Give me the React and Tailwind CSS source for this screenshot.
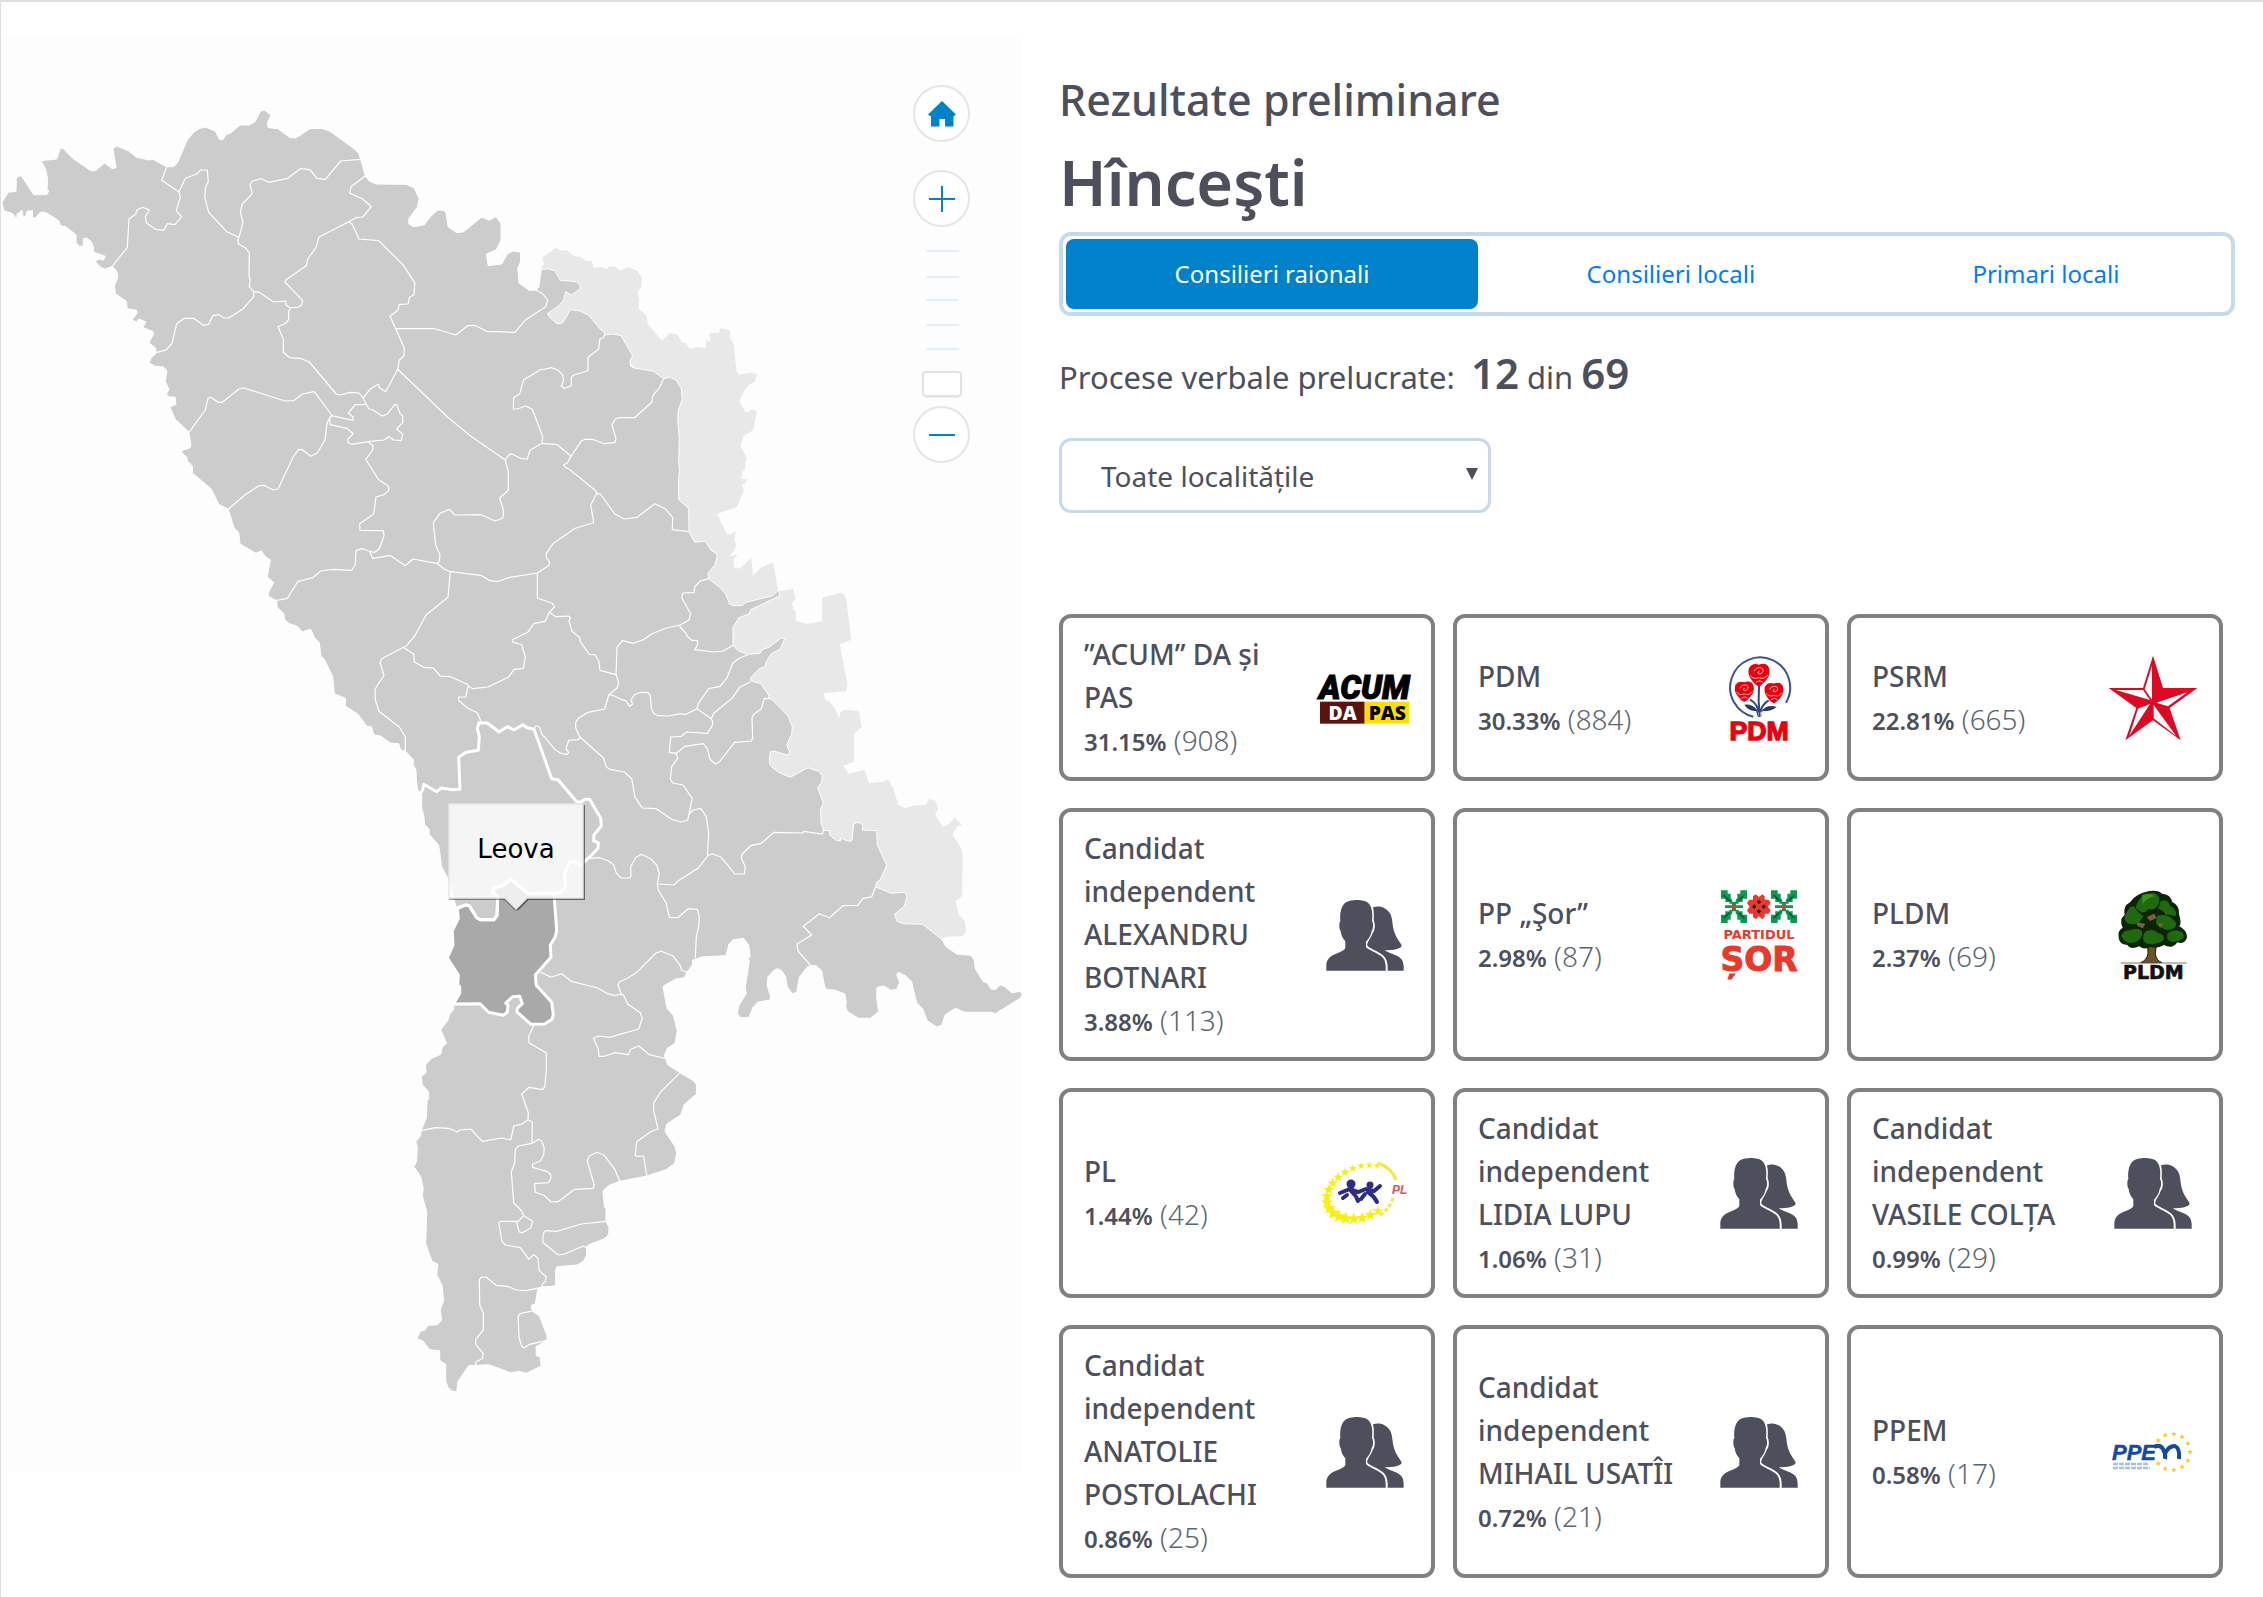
import React from "react";

/* Map geometry: every list of points is kept on one of five drawing tiles. */
const TILES = {
  A: [0, 90],
  B: [380, 200],
  C: [250, 560],
  D: [640, 560],
  E: [400, 960],
};

function place(tile, points) {
  const [ox, oy] = TILES[tile];
  return points
    .trim()
    .split(/\s+/)
    .map((pair) => {
      const [x, y] = pair.split(",").map(Number);
      return `${(ox + x / 3).toFixed(1)} ${(oy + y / 3).toFixed(1)}`;
    })
    .join("L");
}

const line = (parts) => "M" + parts.map(([t, p]) => place(t, p)).join("L");
const area = (parts) => line(parts) + "Z";

const COUNTRY = area([
  ["A", "6,337 25,307 48,304 49,264 58,257 66,260 101,314 140,314 146,304 141,296 143,268 136,235 123,212 170,207 181,174 190,176 218,205 272,242 286,242 314,219 337,236 348,233 339,177 350,168 385,182 410,202 447,210 458,208 500,230 521,230 532,219 562,150 580,128 600,115 615,111 645,122 659,149 668,149 680,133 691,130 720,105 748,105 766,94 781,64 793,60 813,75 801,101 805,113 834,116 870,143 887,144 930,116 966,115 990,124 1062,176 1076,190 1082,208 1096,258 1108,273 1128,282 1218,283 1243,294 1257,326 1252,352 1227,385 1226,401 1241,410 1273,404 1293,378 1314,360 1330,361 1338,368 1345,411 1370,428 1391,425 1445,381 1467,391 1488,380 1503,401 1503,451 1489,479 1459,493 1465,527"],
  ["B", "365,192 382,162 400,153 421,156 422,185 413,205 417,249 447,271 468,270 476,262 484,209 503,206 525,212 541,241 590,245 601,258 600,268 574,285 557,275 551,300 537,317 503,340 506,349 530,371 545,370 552,363 571,329 600,333 626,346 663,390 673,395 674,405 700,402 723,407 758,467 751,480 751,496 758,503 820,514 851,536 869,532 888,540 904,566 907,598 895,630 893,660 898,716 896,790 899,815 896,828 896,899 926,925 927,995 944,1027 976,1024 995,1053 1006,1058 1012,1068 1004,1096 984,1119 986,1136 1020,1163 1037,1182 1049,1213 1062,1217 1086,1216 1098,1207 1178,1187 1195,1171 1200,1187 1112,1229 1107,1242 1077,1253 1059,1282 1059,1336 1076,1353 1104,1363 1141,1360 1145,1350 1168,1341 1204,1314 1214,1316 1200,1348 1174,1361 1157,1388 1156,1399 1137,1407 1113,1432 1111,1442"],
  ["D", "331,362 362,371 386,405 387,414 400,422 444,468 457,500 455,523 440,555 449,576 444,586 404,574 391,575 388,605 392,618 415,637 451,652 504,623 536,634 547,647 545,666 533,683 550,730 542,745 543,790 551,811 568,812 569,825 588,841 601,843 602,835 627,844 636,841 641,793 650,788 663,789 669,799 667,810 710,812 712,855 740,916 720,960 709,967 707,980 752,1000 795,997 801,1010 793,1038 764,1063 771,1084 790,1091 848,1093 905,1138 919,1161 952,1183 993,1186 1003,1200 1006,1226 1030,1265 1042,1269 1053,1287 1067,1289 1080,1274 1093,1279 1115,1298 1143,1294 1146,1307 1140,1315 1066,1361 1055,1357 975,1357 946,1345 916,1364 905,1396 890,1401 862,1382 848,1347 830,1328 815,1266 798,1248 775,1237 770,1245 779,1267 770,1288 753,1291 732,1278 711,1282 710,1314 716,1355 691,1375 655,1375 622,1354 617,1340 619,1325 614,1301 583,1290 562,1289 554,1281 545,1232 528,1217 512,1217 502,1221 478,1252 470,1297 456,1301 441,1278 437,1250 425,1232 413,1226 403,1230 384,1250 381,1276 392,1310 389,1321 354,1326 340,1341 326,1373 303,1373 292,1361 297,1335 319,1301 316,1280 328,1205 324,1194 331,1191 326,1155 311,1135 280,1139 267,1152 258,1187 184,1191 170,1197 158,1200 157,1215 141,1237 133,1253 107,1257 69,1279 81,1345 100,1366 112,1412 105,1450 82,1465 73,1488 78,1497"],
  ["E", "803,314 840,338 880,362 890,374 889,403 853,433 842,465 800,492 795,514 825,560 830,580 824,610 798,629 740,648 659,664 628,676 609,692 613,740 618,746 618,784 627,802 626,824 612,837 566,854 559,861 560,886 550,904 531,915 471,920 466,932 467,978 414,983 406,1032 394,1036 397,1053 418,1068 441,1127 441,1141 408,1160 409,1187 420,1190 424,1218 379,1240 358,1234 332,1238 266,1214 206,1217 174,1264 170,1296 157,1293 145,1284 137,1264 137,1213 119,1201 119,1172 89,1169 68,1142 51,1136 61,1114 74,1111 84,1096 112,1094 125,1081 121,1047 131,1024 126,976 110,944 113,912 96,904 77,851 80,754 67,707 70,686 62,650 42,620 50,603 52,560 47,546 62,526 64,511 79,474 81,423 86,416 86,396 67,374 64,350 79,337 76,316 95,295 122,283 127,261 140,250 122,209 143,182 149,162 161,149 162,127"],
  ["C", "631,1300 631,1280 625,1274 627,1245 594,1194 611,1155 609,1112 627,1075 620,1046 608,1005 596,960 575,920 566,856 537,822 538,809 524,793 521,765 515,745 515,705 503,690 499,660 498,630 489,613 491,600 466,573 452,570 446,551 421,549 393,529 371,524 365,501 350,498 323,462 286,438 286,415 253,401 248,350 222,296 213,290 208,248 193,232 182,208 157,215 140,198 118,191 104,179 101,160 82,143 80,122 54,108 56,96 71,68 52,50 61,0"],
  ["A", "813,1412 795,1399 784,1382 768,1390 720,1362 716,1327 702,1314 685,1258 656,1243 634,1197 577,1149 577,1128 562,1112 561,1102 544,1087 551,1079 568,1075 573,1067 567,1027 526,988 509,951 528,943 525,921 508,921 499,912 507,898 496,875 501,842 491,831 465,829 447,818 454,803 469,789 467,775 447,758 461,731 459,725 428,712 438,696 416,687 410,696 396,690 411,670 410,661 382,656 379,634 347,612 343,588 353,563 351,545 337,529 315,538 301,531 285,514 298,507 311,510 316,499 281,487 280,469 274,455 260,444 250,446 250,469 238,469 228,457 228,434 197,410 181,407 178,394 160,381 136,367 121,367 106,384 98,383 97,361 81,364 76,381 69,380 66,361 52,372 50,386 37,370 12,363"],
]);

const EAST_BANK = area([
  ["B", "484,209 485,200 493,193 487,173 527,143 545,152 559,150 583,169 602,171 620,184 636,183 640,204 661,201 680,207 686,200 703,198 721,212 745,201 773,213 786,235 783,263 773,275 778,300 775,325 800,348 803,372 846,422 870,399 890,403 908,428 917,430 929,446 950,441 978,444 979,418 991,427 988,400 1018,398 1019,384 1050,391 1051,415 1061,432 1069,513 1076,525 1090,522 1114,518 1132,523 1124,545 1107,554 1093,572 1078,604 1096,636 1107,636 1114,628 1131,634 1120,690 1090,709 1082,737 1102,778 1096,783 1095,809 1087,815 1083,836 1103,838 1093,851 1086,853 1091,872 1070,921 1011,942 1042,1004 1067,995 1063,1020 1069,1033 1064,1050 1048,1070 1073,1062 1060,1080 1063,1102 1079,1106 1114,1074 1119,1127 1142,1103 1179,1087 1194,1170 1202,1173 1238,1167 1247,1195 1236,1210 1240,1228 1247,1236 1248,1263 1282,1272 1326,1263 1327,1193 1381,1178 1391,1181 1399,1201 1414,1319 1379,1333 1403,1456 1398,1474 1330,1480"],
  ["D", "556,419 570,426 585,447 597,474 602,456 615,449 657,453 665,502 642,521 642,605 610,617 626,641 674,629 686,669 732,665 740,659 750,664 753,678 759,682 775,735 796,745 815,738 858,734 866,717 886,722 895,750 887,755 887,767 909,801 927,792 944,773 967,796 953,799 937,822 962,862 968,887 966,1008 947,1024 956,1065 974,1083 978,1113 968,1128 920,1130 905,1138 820,1130 740,1080 680,960 600,900 480,720 380,640 360,600 400,500 300,400"],
  ["B", "1000,1330 960,1200 940,1100 880,900 860,600 800,530 700,450 600,360 520,400 480,330 474,275"],
]);

const BORDERS = [
  [["A", "500,230 485,271 537,306 541,322 529,362 544,379 541,386 524,404 502,401 492,421 467,418 440,400 436,380 448,360 428,352 410,361 407,373 387,386 382,472 337,529"]],
  [["A", "537,306 556,265 590,252 602,240 622,240 625,275 617,290 614,322 626,367 680,425 717,442"]],
  [["A", "1082,208 1022,213 976,268 951,265 930,239 901,236 863,265 806,277 784,266 757,273 750,285 757,311 727,342 721,367 729,397 717,442 713,450 716,463 736,473 748,489 747,560 751,570 748,590 761,604 761,620 730,656 686,684 672,684 656,674 638,677 626,703 611,706 581,685 553,685 530,701 516,760 498,780 469,788"]],
  [["A", "761,604 778,607 821,636 857,633 858,644 870,653 894,652 904,646 908,632 856,577 856,571 919,527 923,507 948,473 957,441 1046,395 1068,383 1088,381 1114,350 1088,327 1049,309 1053,290 1096,258"]],
  [["A", "1046,395 1056,401 1077,447 1136,452 1209,524 1244,578 1242,614 1229,621 1224,642 1198,643 1194,660 1170,679 1187,716 1213,774 1211,798 1198,811 1193,838 1157,905 1138,893 1136,882 1112,896 1089,924 1077,909 1050,907 1020,915 1009,912 928,816 905,806 869,803 850,787 850,747 834,710 857,700 866,688 866,666 870,653"]],
  [["A", "567,1027 616,960 624,925 632,922 655,937 667,937 716,898 730,893 855,933 881,932 907,912 943,905 995,975 987,988 981,1000 975,1050 952,1089 932,1099 905,1078 895,1079 878,1104 834,1197 819,1200 792,1186 776,1188 735,1214 685,1258"]],
  [["A", "1089,924 1106,956 1119,960 1146,978 1161,973 1184,944 1190,944 1200,970 1208,978 1208,997 1190,1017 1208,1033 1204,1052 1181,1050 1166,1040 1152,1050 1104,1055 1056,1063 1044,1058 1044,1047 1060,1031 1040,1015 991,1004 988,988 995,977 1058,991 1060,982 1045,969 1066,944 1097,943"]],
  [["A", "1104,1055 1119,1067 1118,1080 1097,1108 1136,1169 1166,1189 1166,1201 1153,1214 1128,1221 1121,1272 1079,1301 1080,1321 1150,1322 1152,1337 1138,1376 1124,1387 1109,1384 1088,1376 1068,1381 1066,1424 1055,1441 998,1438 962,1443 938,1463 893,1475 862,1525 830,1531"]],
  [["A", "1109,1384 1118,1406 1170,1396 1216,1427 1239,1407 1280,1415 1311,1420 1333,1438 1352,1445 1442,1456"], ["B", "330,1142 352,1145 385,1133 472,1119"]],
  [["B", "53,508 205,653 275,710 376,780 385,815 385,871 359,894 371,935 368,955 345,963 304,944 224,945 209,928 180,940 160,968 167,1036 180,1065 178,1083 171,1090"]],
  [["B", "47,385 164,386 227,405 263,377 284,376 320,394 405,397 435,361 497,320 503,300 490,283 468,270"]],
  [["B", "674,405 671,412 659,418 656,447 624,472 624,512 580,526 574,533 574,557 553,565 544,558 550,545 549,526 534,510 515,503 480,510 431,539 419,581 401,593 400,627 412,627 437,618 457,628 488,710 486,730 450,751 442,777 425,776 396,762 387,764 376,780"]],
  [["B", "486,730 532,734 573,769 605,722 615,718 637,718 673,731 704,728 708,716 696,674 706,657 718,653 764,653 816,606 819,586 836,566 851,536"]],
  [["B", "573,769 562,789 551,794 555,801 571,810 647,872 650,880 632,915 641,968 586,985 520,1030 499,1060 499,1073 508,1085 508,1096 472,1119 472,1194 517,1210 524,1221 508,1236 496,1264 462,1270 443,1297 397,1319 398,1326 425,1334 436,1371 430,1405 402,1408 385,1432 324,1461 278,1466 265,1458"]],
  [["B", "650,880 661,882 704,941 732,957 771,952 825,911 858,928 878,953 877,989 926,995"]],
  [["B", "508,1236 527,1250 565,1248 572,1253 567,1262 576,1294 600,1313 601,1325 628,1363 645,1364 656,1382 660,1411 708,1424 711,1342 727,1322 760,1330 790,1319 816,1301 860,1284 900,1275 927,1260 932,1241 905,1193 908,1179 942,1178 944,1161 961,1143 986,1136"]],
  [["B", "900,1275 900,1281 918,1300 921,1308 935,1321 952,1321 953,1334 944,1349 1003,1356 1029,1353 1059,1336"]],
  [["D", "324,284 297,295 278,310 262,352 240,379 206,386 175,431 171,446 214,476 218,485 217,497 202,520 140,516 124,529 92,531 88,577 109,580 135,559 190,551 202,565 210,598 226,612 238,606 284,547 334,543 338,535 336,475 342,462 364,447 373,415 387,416"]],
  [["D", "214,476 222,459 276,415 299,382 331,366"]],
  [["B", "211,1115 204,1192 138,1245 106,1305 80,1337"], ["C", "460,262 395,296 390,308 402,346 375,388 376,420 387,454 448,501 466,530 466,573"]],
  [["C", "460,262 491,282 493,306 524,323 550,324 571,348 602,350 655,374"]],
  [["C", "655,376 647,411 625,411 627,422 652,444 682,458 692,482"]],
  [["C", "1098,343 1106,368 1101,384 1076,405 1064,447 1014,457 985,475 977,487 977,504 989,530 1060,593 1069,621 1080,628 1123,636 1145,656 1155,712 1177,744 1219,746 1265,778 1293,786 1313,780 1327,715 1299,675 1268,669 1261,657 1265,620 1283,595 1278,579"]],
  [["C", "1076,405 1089,406 1115,419 1127,422 1139,439 1148,432 1143,420 1153,404 1172,397 1194,398 1201,407 1204,444 1212,461 1225,467 1256,468 1292,461 1305,464 1341,446"]],
  [["C", "989,533 985,539 956,541 948,567 956,577 952,583 935,581 915,569 885,532 877,525 868,500 858,497 851,508"]],
  [["C", "1313,780 1317,763 1330,750 1352,745 1369,770 1376,820 1372,890 1344,925 1285,962 1272,975 1225,972"]],
  [["D", "202,887 217,881 241,890 262,914 284,942 313,942 316,920 304,895 306,883 332,857 364,850 402,817 488,819 491,814 547,822 551,811"]],
  [["C", "1020,895 1049,893 1075,902 1091,914 1098,937 1112,954 1139,954 1143,948 1142,920 1158,892 1175,883 1203,897 1220,915 1228,940 1222,972 1225,990 1249,1030 1258,1072 1283,1073 1315,1046 1342,1048 1348,1070 1346,1100 1339,1130 1336,1195"]],
  [["D", "707,980 695,1010 668,1016 653,1036 609,1037 568,1073 538,1061 490,1099 515,1125 471,1152 474,1173 512,1217"]],
  [["C", "872,1237 903,1252 935,1241 964,1264 1043,1284 1073,1301 1094,1307 1114,1302 1104,1275 1107,1266 1135,1253 1160,1237 1218,1179 1234,1174 1268,1187 1291,1217 1295,1231 1312,1237"]],
  [["E", "662,104 670,104 683,132 721,158 727,175 716,207 628,232 597,228 580,234 595,267 597,289 613,289 643,278 685,284 692,268 717,258 748,284 803,297"]],
  [["E", "840,338 780,398 761,430 761,452 774,507 752,515 710,545 706,585 710,589 731,588 740,648"]],
  [["E", "401,197 386,229 387,248 439,279 439,333 434,380 428,389 387,382 365,403 385,458 384,480 364,493 341,498 332,540 304,534 247,544 212,507 180,510 172,516 147,505 106,503 64,512"]],
  [["E", "384,480 397,486 396,550 355,558 346,568 344,610 334,635 341,729 365,752 371,767 355,784 301,784 296,789 306,844 316,855 361,863 386,898 401,884 414,895 417,931 439,951 436,965 428,970 425,982"]],
  [["E", "396,550 417,538 425,543 433,565 431,584 421,603 397,613 398,622 440,634 452,643 452,656 445,668 404,671 406,697 432,706 454,726 474,725 524,688 580,685 583,675 562,604 567,588 591,577 613,586 645,629 659,664"]],
  [["E", "371,767 398,784 392,804 366,819 357,815 350,786"]],
  [["E", "618,784 544,792 470,814 437,812 430,820 428,847 475,885 494,882 550,858 559,863"]],
  [["E", "466,978 425,982 379,992 350,990 322,979 289,976 258,951 243,952 238,960 239,1035 250,1060 250,1110 227,1138 227,1153 249,1180 248,1195 228,1206 226,1216"]],
  [["E", "397,1053 360,1061 354,1070 357,1130 364,1157 372,1164 389,1153 441,1141"]],
].map(line).join("");

const HINCESTI = line([
  ["C", "509,703 518,690 521,673 560,695 574,684 608,689 630,688 626,592 648,577 685,571 688,530 682,505 687,488 712,489 747,516 772,500 792,510 818,494 832,503 852,508 905,656 924,659 980,725 991,727 1005,718 1019,718 1052,775 1054,798 1032,825 1031,843 1045,848 1044,865 1020,890 988,918 980,905 959,906 944,940 946,980 932,998 833,1001 783,958 762,975 730,985 730,997 743,1010 741,1067 732,1079 691,1079 680,1073 658,1037 647,1035 622,1043"],
]);

const LEOVA = area([
  ["C", "622,1046 647,1035 658,1037 680,1073 691,1079 732,1079 741,1067 743,1010 730,997 730,985 762,975 783,958 833,1001 912,1001 920,1112 916,1130 901,1155 903,1192 856,1245 859,1276 905,1327 910,1364 906,1378 884,1392 843,1393 801,1356 802,1345 817,1331 809,1309 788,1310 767,1329 774,1335 772,1357 760,1366 716,1357 690,1331 610,1332 629,1300 629,1280 623,1274 625,1245 592,1194 609,1155 607,1112 625,1075"],
]);

function MoldovaMap() {
  return (
    <svg viewBox="1 34 1021 1438" className="block w-full" role="img" aria-label="Harta raioanelor">
      <g strokeLinejoin="round" stroke="#ffffff">
        <path d={EAST_BANK} fill="#e8e8e8" stroke="none" />
        <path d={COUNTRY} fill="#cccccc" strokeWidth="1" />
        <path d={BORDERS} fill="none" strokeWidth="1.2" />
        <path d={LEOVA} fill="#a9a9a9" strokeWidth="3" />
        <path d={HINCESTI} fill="none" strokeWidth="3" />
      </g>
      <path d="M584 805V899H528L517 910" fill="none" stroke="#000000" strokeOpacity="0.5" strokeWidth="2" />
      <path d="M449 899H505L516 910" fill="none" stroke="#000000" strokeOpacity="0.4" strokeWidth="2" />
      <path d="M449 804H583V898H527L516 909L505 898H449Z" fill="#ffffff" fillOpacity="0.8" stroke="#e6e6e6" strokeWidth="1.5" />
      <text x="516" y="858" textAnchor="middle" fontSize="26" fill="#000000" className="font-['DejaVu_Sans',sans-serif]">
        Leova
      </text>
    </svg>
  );
}

const roundButton =
  "flex size-[57px] items-center justify-center rounded-full border-2 border-[#e5e5e5] bg-white";

function ZoomControls() {
  return (
    <div className="absolute top-[51px] right-[52px] flex flex-col items-center">
      <button type="button" aria-label="Acasă" className={roundButton}>
        <svg viewBox="0 0 28 26" className="h-[26px] w-[28px]">
          <path d="M14 0L28 13.500L26 15H25.500V25.500H17V18H11.500V25.500H3V15H2L0 13.500Z" fill="#0082ca" />
        </svg>
      </button>
      <button type="button" aria-label="Mărește" className={`${roundButton} mt-7`}>
        <svg viewBox="0 0 26 26" className="size-[26px]">
          <path d="M0 13H26M13 0V26" stroke="#0082ca" strokeWidth="2" />
        </svg>
      </button>
      <div className="relative">
        <svg viewBox="0 0 57 179" className="block h-[179px] w-[57px]">
          <path d="M13 24H46M13 50H46M13 73H46M13 98H46M13 122H46M13 170H46" stroke="#e0eff8" strokeWidth="2" />
          <rect x="10" y="145" width="38" height="24" rx="3" fill="#ffffff" stroke="#e2e2e2" strokeWidth="2" />
        </svg>
        <input
          type="range"
          min="0"
          max="5"
          defaultValue="0"
          aria-label="Nivel zoom"
          className="absolute inset-0 h-full w-full opacity-0"
        />
      </div>
      <button type="button" aria-label="Micșorează" className={roundButton}>
        <svg viewBox="0 0 26 26" className="size-[26px]">
          <path d="M0 13H26" stroke="#0082ca" strokeWidth="2" />
        </svg>
      </button>
    </div>
  );
}

/* Party logos */
const logo = "size-[90px] shrink-0 overflow-visible";

function AcumLogo() {
  return (
    <svg viewBox="810 157 270 270" className={logo} role="img" aria-label="ACUM DA PAS">
      <text x="943" y="294" textAnchor="middle" fontSize="98" fontWeight="900" fontStyle="italic" fill="#000000" stroke="#000000" strokeWidth="3" className="font-[Roboto,sans-serif]">
        ACUM
      </text>
      <rect x="810" y="303" width="134" height="66" fill="#5a1410" />
      <rect x="944" y="303" width="134" height="66" fill="#ffde00" />
      <text x="878" y="357" textAnchor="middle" fontSize="58" fontWeight="800" fill="#ffffff" className="font-['Open_Sans',sans-serif]">
        DA
      </text>
      <text x="1012" y="357" textAnchor="middle" fontSize="58" fontWeight="800" fill="#000000" className="font-['Open_Sans',sans-serif]">
        PAS
      </text>
    </svg>
  );
}

function Rose({ x, y, size }) {
  return (
    <g transform={`translate(${x} ${y}) scale(${size})`}>
      <path d="M-30 -18Q-20 -34 0 -28Q22 -36 30 -18Q36 2 22 18Q12 32 0 38Q-14 32 -22 18Q-36 2 -30 -18Z" fill="#e8000e" />
      <path d="M-14 -8Q-10 -20 2 -19Q14 -18 12 -8Q8 2 -2 -1Q-6 -7 2 -9M-27 4Q-16 18 0 11Q16 18 27 2M-10 26Q0 16 12 25" fill="none" stroke="#f7b3b7" strokeWidth="3" />
    </g>
  );
}

function PdmLogo() {
  return (
    <svg viewBox="42 38 270 270" className={logo} role="img" aria-label="PDM">
      <path d="M160 229A90 90 0 1 1 258 187" fill="none" stroke="#3f4f94" strokeWidth="6" />
      <path d="M177 135Q174 180 179 228M150 178Q172 190 176 215M206 180Q186 192 181 215" fill="none" stroke="#33457f" strokeWidth="6" />
      <path d="M133 193Q158 190 172 210L176 228H184L186 210Q204 190 230 200Q210 216 188 211L181 230H174L168 212Q145 212 133 193Z" fill="#25386f" />
      <Rose x={177} y={101} size={1} />
      <Rose x={133} y={151} size={0.9} />
      <Rose x={222} y={155} size={0.9} />
      <text x="177" y="299" textAnchor="middle" fontSize="80" fontWeight="700" fill="#e8000e" stroke="#e8000e" strokeWidth="4" className="font-['Liberation_Sans',sans-serif]">
        PDM
      </text>
    </svg>
  );
}

function StarLogo() {
  return (
    <svg viewBox="1224 38 270 270" className={logo} role="img" aria-label="PSRM">
      <path d="M1359 46L1389 143L1492 143L1409 203L1442 300L1359 240L1276 300L1309 203L1226 143L1329 143Z" fill="#db0a22" />
      <g fill="#ffffff">
        <path d="M1356 76V178L1334 147Z" />
        <path d="M1462 156L1404 198L1369 187Z" />
        <path d="M1428 286L1361 234L1361 194Z" />
        <path d="M1288 286L1314 205L1350 191Z" />
        <path d="M1248 149L1329 149L1350 179Z" />
      </g>
    </svg>
  );
}

const PEOPLE_FRONT =
  "M829 1111V1094C830 1078 838 1069 856 1061C872 1054 884 1050 886 1043V1023C878 1014 873 1003 872 992C868 988 867 974 869 966L871 962C869 940 873 918 885 908C896 898 938 894 954 907C968 920 968 943 966 962C971 968 970 986 965 992C963 1005 957 1014 948 1024V1040C956 1050 980 1056 994 1068C1006 1078 1008 1092 1007 1111Z";
const PEOPLE_BACK =
  "M969 921C988 914 1010 921 1021 941C1029 957 1026 976 1034 998C1041 1018 1052 1026 1055 1036C1053 1046 1030 1049 1004 1050C1030 1066 1060 1064 1061 1097V1111H1013C1014 1090 1011 1074 997 1063C984 1052 958 1044 952 1036C950 1026 962 1016 968 998C976 990 976 970 971 960C972 945 972 932 969 921Z";

function PeopleLogo() {
  return (
    <svg viewBox="810 869 270 270" className={logo} role="img" aria-label="Candidat independent">
      <path d={PEOPLE_FRONT} fill="#4d4f5c" />
      <path d={PEOPLE_BACK} fill="#4d4f5c" />
    </svg>
  );
}

function Sprig({ x }) {
  const leaf = "M-39 -49H-19V-39H-10V-26L-5 -20V-9H-14V-14H-26V-24H-39Z";
  return (
    <g transform={`translate(${x} 799)`} fill="#089a50">
      <path d={leaf} />
      <path d={leaf} transform="scale(-1 1)" />
      <path d={leaf} transform="scale(1 -1)" />
      <path d={leaf} transform="scale(-1 -1)" />
      <path d="M-27 -4H-6V-14H6V-4H27V4H6V14H-6V4H-27Z" />
      <rect x="-6" y="-6" width="12" height="12" fill="#e8392c" />
      <path d="M-31 -35L-14 -18M31 -35L14 -18M-31 35L-14 18M31 35L14 18" stroke="#17492d" strokeWidth="4" />
    </g>
  );
}

function SorLogo() {
  return (
    <svg viewBox="44 749 270 270" className={logo} role="img" aria-label="Partidul Șor">
      <Sprig x={104} />
      <Sprig x={254} />
      <path d="M169 762L179 770L189 762L196 768V778H208L214 788L206 799L214 810L208 820H196V830L189 837L179 828L169 837L161 830V820H150L143 810L151 799L143 788L150 778H161V768Z" fill="#e8392c" />
      <path d="M179 778L186 785L179 791L172 785ZM179 807L186 813L179 820L172 813ZM158 799L165 792L171 799L165 806ZM187 799L193 792L200 799L193 806Z" fill="#2b1a1a" />
      <text x="179" y="896" textAnchor="middle" fontSize="39" fontWeight="700" fill="#e8392c" className="font-['DejaVu_Sans',sans-serif]">
        PARTIDUL
      </text>
      <text x="179" y="991" textAnchor="middle" fontSize="99" fontWeight="700" fill="#e8392c" stroke="#e8392c" strokeWidth="3" className="font-['DejaVu_Sans',sans-serif]">
        ȘOR
      </text>
    </svg>
  );
}

function TreeLogo() {
  return (
    <svg viewBox="1224 749 270 270" className={logo} role="img" aria-label="PLDM">
      <path d="M1343 905L1344 940Q1340 960 1322 967H1386Q1368 960 1366 940L1370 905Z" fill="#6b5327" stroke="#1c1708" strokeWidth="3" />
      <path d="M1348 752Q1376 748 1386 760Q1412 762 1416 784Q1440 796 1437 822Q1446 850 1438 858Q1462 870 1461 892Q1452 914 1432 906Q1418 928 1392 914Q1372 926 1352 920Q1332 930 1318 918Q1292 930 1282 914Q1256 912 1256 890Q1252 872 1268 862Q1256 838 1274 824Q1268 798 1290 786Q1306 760 1348 752Z" fill="#0e2409" />
      <g fill="#1f6a0f">
        <path d="M1314 784Q1330 756 1362 758Q1384 766 1376 790Q1366 812 1346 806Q1332 824 1318 812Q1300 806 1314 784Z" />
        <path d="M1284 810Q1292 792 1304 800Q1312 818 1330 826Q1320 852 1298 852Q1276 850 1274 836Q1274 822 1284 810Z" />
        <path d="M1382 782Q1404 776 1410 796Q1432 806 1428 828Q1412 822 1398 824Q1388 808 1374 806Z" />
        <path d="M1372 826Q1400 820 1414 834Q1436 846 1424 862Q1404 876 1386 862Q1360 856 1372 826Z" />
        <path d="M1264 886Q1272 868 1292 870Q1308 860 1326 872Q1330 896 1306 906Q1274 914 1264 886Z" />
        <path d="M1336 874Q1356 862 1374 878Q1400 884 1388 902Q1362 918 1336 908Q1322 892 1336 874Z" />
        <path d="M1402 880Q1424 862 1446 876Q1458 890 1440 900Q1414 912 1402 896Z" />
      </g>
      <path d="M1326 764Q1350 756 1364 768Q1340 772 1328 792Z" fill="#3a9618" />
      <path d="M1340 830L1362 820L1370 832L1350 842ZM1310 846L1336 850L1328 864L1312 856ZM1374 848L1392 852L1380 862Z" fill="#7a6038" />
      <path d="M1262 968H1460" stroke="#777777" strokeWidth="3" />
      <text x="1360" y="1015" textAnchor="middle" fontSize="57" fontWeight="700" fill="#111111" stroke="#111111" strokeWidth="2" className="font-['DejaVu_Sans',sans-serif]">
        PLDM
      </text>
    </svg>
  );
}

const starPath = (cx, cy, r) => {
  let d = "";
  for (let i = 0; i < 10; i += 1) {
    const a = -Math.PI / 2 + (i * Math.PI) / 5;
    const q = i % 2 ? r * 0.42 : r;
    d += `${i ? "L" : "M"}${(cx + q * Math.cos(a)).toFixed(1)} ${(cy + q * Math.sin(a)).toFixed(1)}`;
  }
  return d + "Z";
};

const PL_STARS = Array.from({ length: 18 }, (_, i) => {
  const a = ((45 + i * 14) * Math.PI) / 180;
  const big = 7.2 - Math.abs(i - 5) * 0.3;
  return starPath(41 + 33 * Math.cos(a) - 9 * Math.sin(a), 44 + 27 * Math.sin(a), big);
}).join("");

function PlLogo() {
  return (
    <svg viewBox="0 0 90 90" className={logo} role="img" aria-label="PL">
      <path d={PL_STARS} fill="#f8ee10" />
      <path d="M58 15Q72 20 76 32" fill="none" stroke="#f3e940" strokeWidth="3" />
      <path d="M73 50Q70 60 60 67" fill="none" stroke="#f3e940" strokeWidth="3" strokeDasharray="4 2" />
      <g fill="none" stroke="#2f2c86" strokeWidth="4" strokeLinecap="round">
        <path d="M20 45L30 41L38 44L46 41L54 43L60 38M31 43Q36 47 38 53M27 47L23 50M48 44Q54 48 57 54M45 46L41 51" />
      </g>
      <circle cx="31" cy="36" r="4.500" fill="#2f2c86" />
      <circle cx="50" cy="37" r="3.500" fill="#2f2c86" />
      <text x="72" y="46" fontSize="12" fontWeight="700" fontStyle="italic" fill="#ea4b5b" className="font-['Liberation_Sans',sans-serif]">
        PL
      </text>
    </svg>
  );
}

const PPEM_STARS = Array.from({ length: 11 }, (_, i) => {
  const a = ((-140 + i * 28) * Math.PI) / 180;
  return starPath(64 + 18 * Math.cos(a), 45 + 18 * Math.sin(a), 3);
}).join("");

function PpemLogo() {
  return (
    <svg viewBox="0 0 90 90" className={logo} role="img" aria-label="PPEM">
      <path d={PPEM_STARS} fill="#f6c832" />
      <text x="4" y="53" fontSize="22" fontWeight="700" fontStyle="italic" fill="#164a9c" stroke="#164a9c" strokeWidth="0.500" className="font-['Liberation_Sans_Narrow','Liberation_Sans',sans-serif]">
        PPE
      </text>
      <path d="M46 40Q52 37 55 42Q58 47 57 52M57 47Q60 39 67 39Q72 41 71 52" fill="none" stroke="#164a9c" strokeWidth="4" strokeLinejoin="round" />
      <path d="M5 57H40M5 61H42" stroke="#a9c0e4" strokeWidth="2.500" strokeDasharray="5 1" />
    </svg>
  );
}

const RESULTS = [
  { name: "”ACUM” DA și PAS", share: "31.15%", votes: 908, Logo: AcumLogo },
  { name: "PDM", share: "30.33%", votes: 884, Logo: PdmLogo },
  { name: "PSRM", share: "22.81%", votes: 665, Logo: StarLogo },
  { name: "Candidat independent ALEXANDRU BOTNARI", share: "3.88%", votes: 113, Logo: PeopleLogo },
  { name: "PP „Şor”", share: "2.98%", votes: 87, Logo: SorLogo },
  { name: "PLDM", share: "2.37%", votes: 69, Logo: TreeLogo },
  { name: "PL", share: "1.44%", votes: 42, Logo: PlLogo },
  { name: "Candidat independent LIDIA LUPU", share: "1.06%", votes: 31, Logo: PeopleLogo },
  { name: "Candidat independent VASILE COLȚA", share: "0.99%", votes: 29, Logo: PeopleLogo },
  { name: "Candidat independent ANATOLIE POSTOLACHI", share: "0.86%", votes: 25, Logo: PeopleLogo },
  { name: "Candidat independent MIHAIL USATÎI", share: "0.72%", votes: 21, Logo: PeopleLogo },
  { name: "PPEM", share: "0.58%", votes: 17, Logo: PpemLogo },
];

function ResultCard({ name, share, votes, Logo }) {
  return (
    <li className="flex items-center justify-between gap-4 rounded-xl border-4 border-[#808080] px-[21px] py-[15px]">
      <div className="text-[28px] leading-[43px]">
        <h3 className="font-medium">{name}</h3>
        <p>
          <strong className="text-[24px] leading-none font-semibold">{share}</strong>{" "}
          <span className="font-light text-[#5b6770]">({votes})</span>
        </p>
      </div>
      <Logo />
    </li>
  );
}

function Tabs() {
  const idle = "flex-auto rounded-lg text-[#007bff]";
  return (
    <div role="tablist" className="flex h-[84px] rounded-xl border-4 border-[#c5daef] p-[3px] text-[24px]">
      <button type="button" role="tab" aria-selected="true" className="flex-auto rounded-lg bg-[#0082ca] text-white">
        Consilieri raionali
      </button>
      <button type="button" role="tab" aria-selected="false" className={idle}>
        Consilieri locali
      </button>
      <button type="button" role="tab" aria-selected="false" className={idle}>
        Primari locali
      </button>
    </div>
  );
}

export default function App() {
  return (
    <div className="min-h-screen border-t-2 border-l border-[#dedede] bg-white font-['Noto_Sans',sans-serif] text-[#4d4f5c]">
      <main className="grid grid-cols-[1021fr_1241fr] pt-8">
        <section className="relative self-start bg-[#fdfdfd]">
          <MoldovaMap />
          <ZoomControls />
        </section>
        <section className="pt-[34px] pr-7 pl-[37px]">
          <h2 className="text-[43px] leading-[64px] font-medium">Rezultate preliminare</h2>
          <h1 className="text-[63px] leading-[100px] font-semibold">Hînceşti</h1>
          <Tabs />
          <p className="mt-6 text-[31px] leading-[74px]">
            Procese verbale prelucrate:&nbsp; <strong className="text-[42px] leading-none font-semibold">12</strong> din{" "}
            <strong className="text-[42px] leading-none font-semibold">69</strong>
          </p>
          <div className="relative mt-6 w-[432px]">
            <select
              aria-label="Localitatea"
              className="h-[75px] w-full appearance-none rounded-xl border-3 border-[#c5daef] bg-white pl-[39px] text-[28px]"
            >
              <option>Toate localitățile</option>
            </select>
            <svg viewBox="0 0 12 12" className="pointer-events-none absolute top-[30px] right-[13px] size-3">
              <path d="M0 0H12L6 12Z" fill="#4d4f5c" />
            </svg>
          </div>
          <ul className="mt-[101px] mr-3 grid grid-cols-3 gap-x-[18px] gap-y-[27px]">
            {RESULTS.map((item) => (
              <ResultCard key={item.name} {...item} />
            ))}
          </ul>
        </section>
      </main>
    </div>
  );
}
